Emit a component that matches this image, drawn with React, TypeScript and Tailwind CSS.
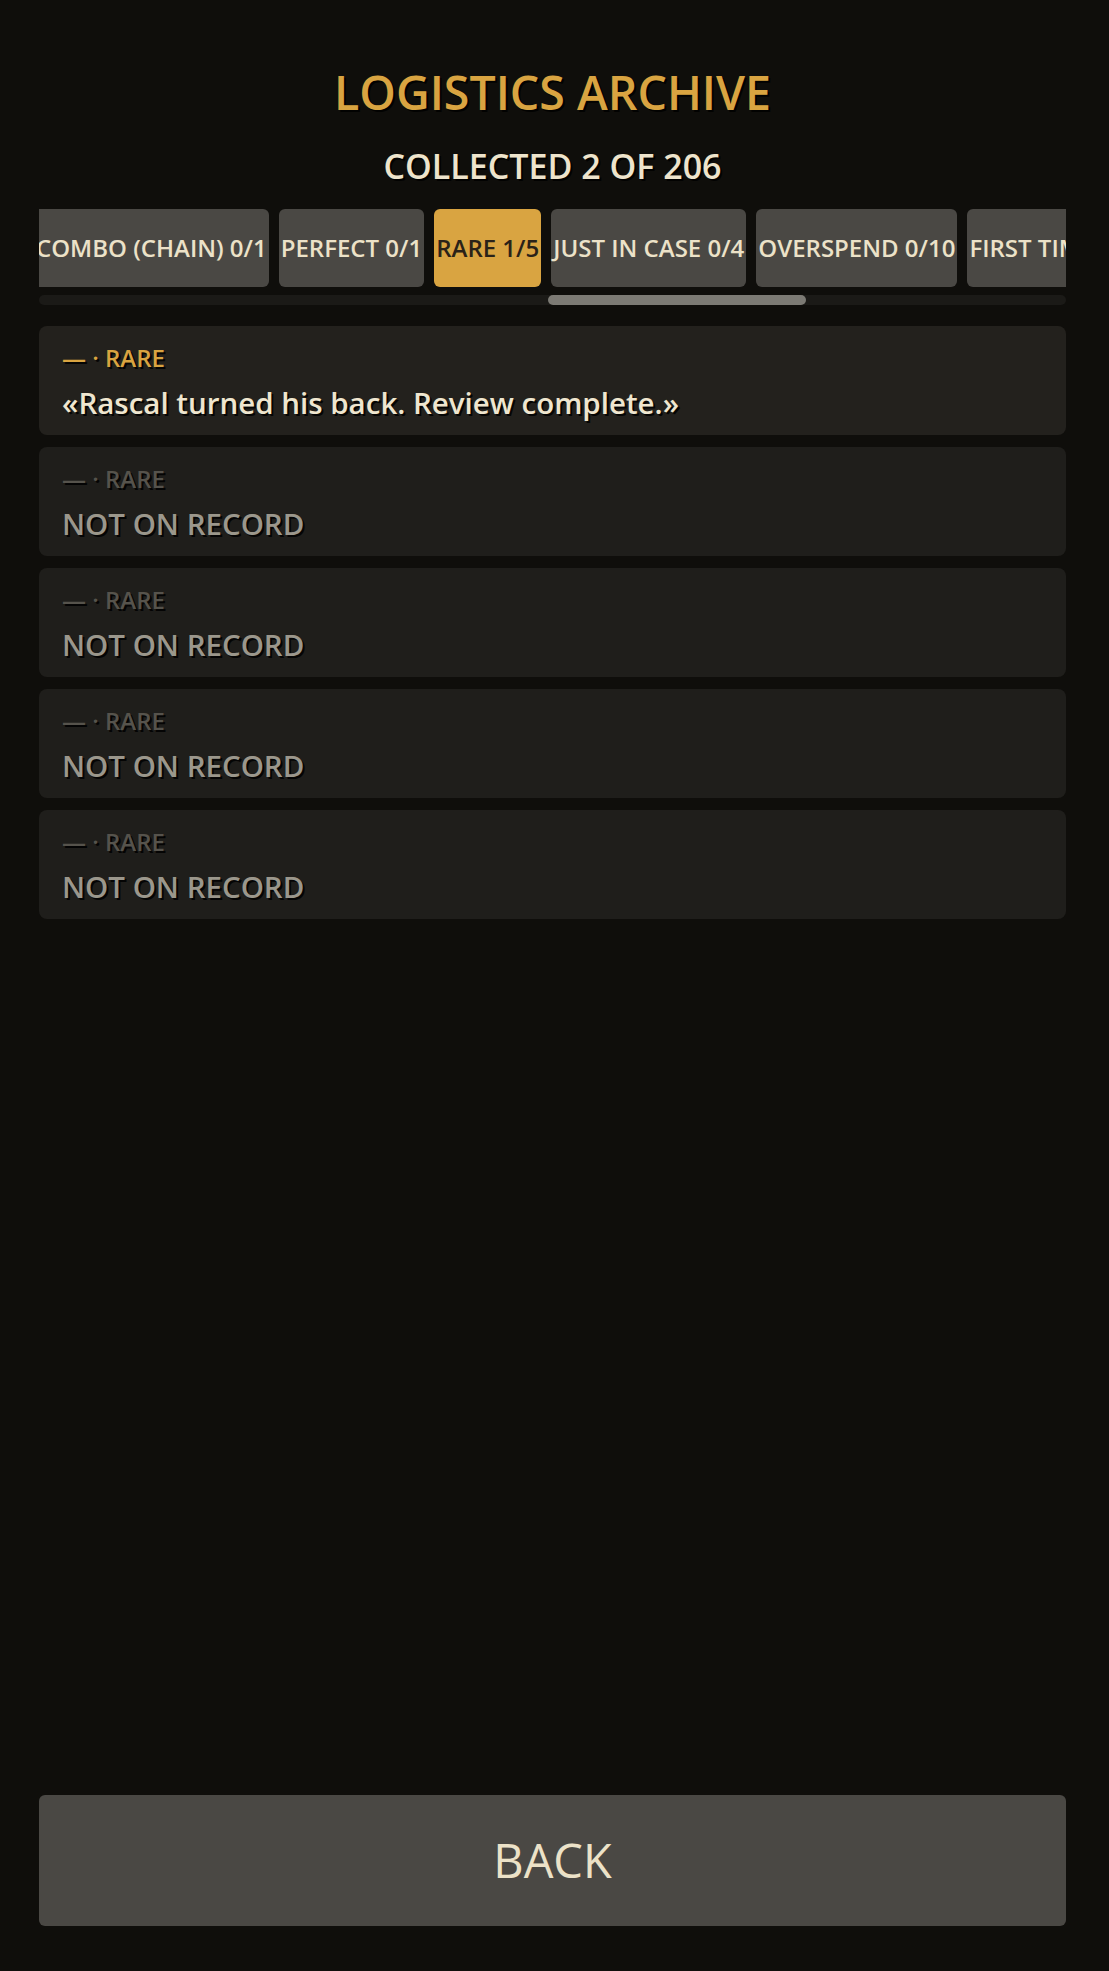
import {useLayoutEffect, useRef} from "react";

interface Category {
  name: string;
  got: number;
  total: number;
}

const categories: Category[] = [
  {name: "ALL", got: 2, total: 206},
  {name: "COMMON", got: 1, total: 120},
  {name: "COMBO (CHAIN)", got: 0, total: 1},
  {name: "PERFECT", got: 0, total: 1},
  {name: "RARE", got: 1, total: 5},
  {name: "JUST IN CASE", got: 0, total: 4},
  {name: "OVERSPEND", got: 0, total: 10},
  {name: "FIRST TIME", got: 0, total: 6},
  {name: "LATE NIGHT", got: 0, total: 8},
];

const entries = [
  {unlocked: true, text: "«Rascal turned his back. Review complete.»"},
  {unlocked: false, text: "NOT ON RECORD"},
  {unlocked: false, text: "NOT ON RECORD"},
  {unlocked: false, text: "NOT ON RECORD"},
  {unlocked: false, text: "NOT ON RECORD"},
];

const shadow = "[text-shadow:2px_2px_0_rgba(0,0,0,0.85)]";

export default function App() {
  const rowRef = useRef<HTMLDivElement>(null);
  const firstRef = useRef<HTMLButtonElement>(null);

  useLayoutEffect(() => {
    const row = rowRef.current;
    const first = firstRef.current;
    if (!row || !first) return;
    const diff = first.getBoundingClientRect().left - row.getBoundingClientRect().left;
    row.scrollLeft = row.scrollLeft + diff + 5;
  }, []);

  return (
    <div className="min-h-screen bg-[#0f0e0b] flex flex-col pl-[39px] pr-[43px] pb-[45px] font-['Open_Sans',sans-serif]">
      <h1 className={`mt-[69px] text-center text-[46.5px] leading-none font-semibold text-[#d9a441] ${shadow}`}>
        LOGISTICS ARCHIVE
      </h1>
      <div className={`mt-[33px] text-center text-[34px] leading-none font-semibold text-[#eee4cc] ${shadow}`}>
        COLLECTED 2 OF 206
      </div>

      <div ref={rowRef} className="mt-[26px] flex gap-[10px] overflow-x-auto [scrollbar-width:none]">
        {categories.map((c) => {
          const active = c.name === "RARE";
          return (
            <button
              key={c.name}
              ref={c.name === "COMBO (CHAIN)" ? firstRef : undefined}
              className={`flex-none h-[78px] px-[2px] rounded-[6px] whitespace-nowrap text-[24px] font-semibold ${
                active ? "bg-[#d9a441] text-[#2a2218]" : "bg-[#4a4844] text-[#ece2c8]"
              }`}
            >
              {c.name} {c.got}/{c.total}
            </button>
          );
        })}
      </div>
      <div className="mt-[8px] h-[10px] rounded-full bg-[#1b1a17]">
        <div className="ml-[509px] w-[258px] h-full rounded-full bg-[#7c7a74]" />
      </div>

      <div className="mt-[21px] flex flex-col gap-[12px]">
        {entries.map((e, i) => (
          <div key={i} className={`h-[109px] rounded-[8px] px-[23px] pt-[20px] ${e.unlocked ? "bg-[#23211d]" : "bg-[#1f1e1b]"}`}>
            <div className={`text-[24px] leading-none font-semibold ${shadow} ${e.unlocked ? "text-[#d9a441]" : "text-[#56534c]"}`}>
              — · RARE
            </div>
            <div className={`mt-[18px] text-[29.5px] leading-none font-semibold ${shadow} ${e.unlocked ? "text-[#efe6cf]" : "text-[#9b978c]"}`}>
              {e.text}
            </div>
          </div>
        ))}
      </div>

      <div className="flex-1" />

      <button className="h-[131px] rounded-[6px] bg-[#4a4844] text-[47px] font-medium text-[#ece2c8]">
        BACK
      </button>
    </div>
  );
}
